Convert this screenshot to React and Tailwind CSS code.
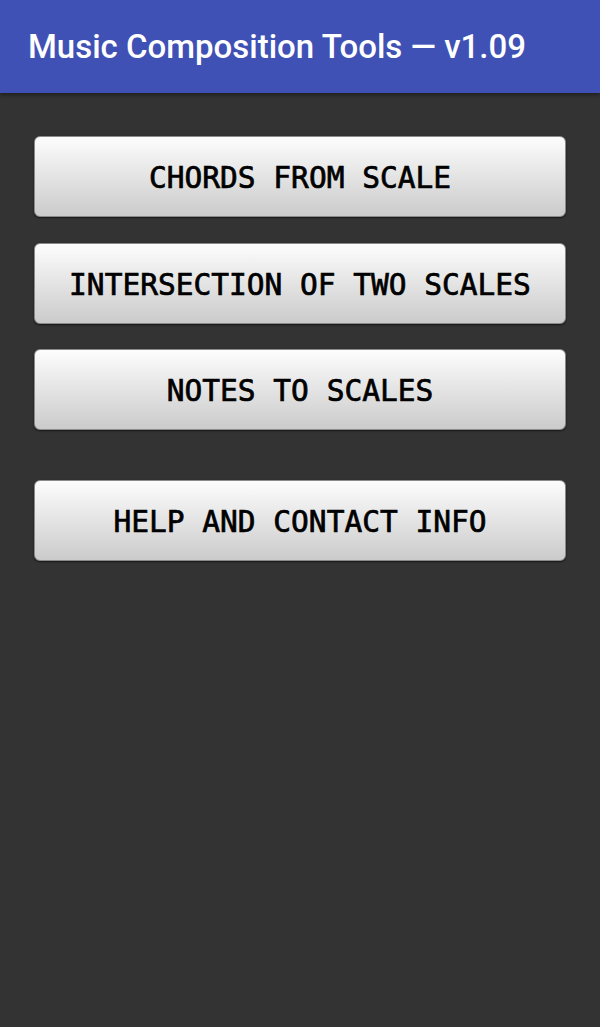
export default function App() {
  const Btn = ({ children, className = "" }) => (
    <button
      className={
        "w-full h-[81px] rounded-[6px] border border-[#8a8a8a] bg-gradient-to-b from-[#fdfdfd] to-[#cbcbcb] shadow-[0_1px_2px_rgba(0,0,0,0.6)] text-black text-[29.5px] font-normal [-webkit-text-stroke:0.7px_black] pt-[4px] flex items-center justify-center " +
        className
      }
      style={{ fontFamily: '"DejaVu Sans Mono", monospace' }}
    >
      {children}
    </button>
  );
  return (
    <div className="w-[600px] h-[1027px] bg-[#333333] flex flex-col">
      <div className="h-[93px] bg-[#3f51b5] flex items-center px-[28px] shadow-[0_2px_4px_rgba(0,0,0,0.4)]">
        <span
          className="text-white text-[33px] pt-[1px]"
          style={{ fontFamily: 'Roboto, sans-serif', fontWeight: 500 }}
        >
          Music Composition Tools — v1.09
        </span>
      </div>
      <div className="flex flex-col px-[34px] pt-[43px]">
        <Btn>CHORDS FROM SCALE</Btn>
        <Btn className="mt-[26px]">INTERSECTION OF TWO SCALES</Btn>
        <Btn className="mt-[25px]">NOTES TO SCALES</Btn>
        <Btn className="mt-[50px]">HELP AND CONTACT INFO</Btn>
      </div>
    </div>
  );
}
